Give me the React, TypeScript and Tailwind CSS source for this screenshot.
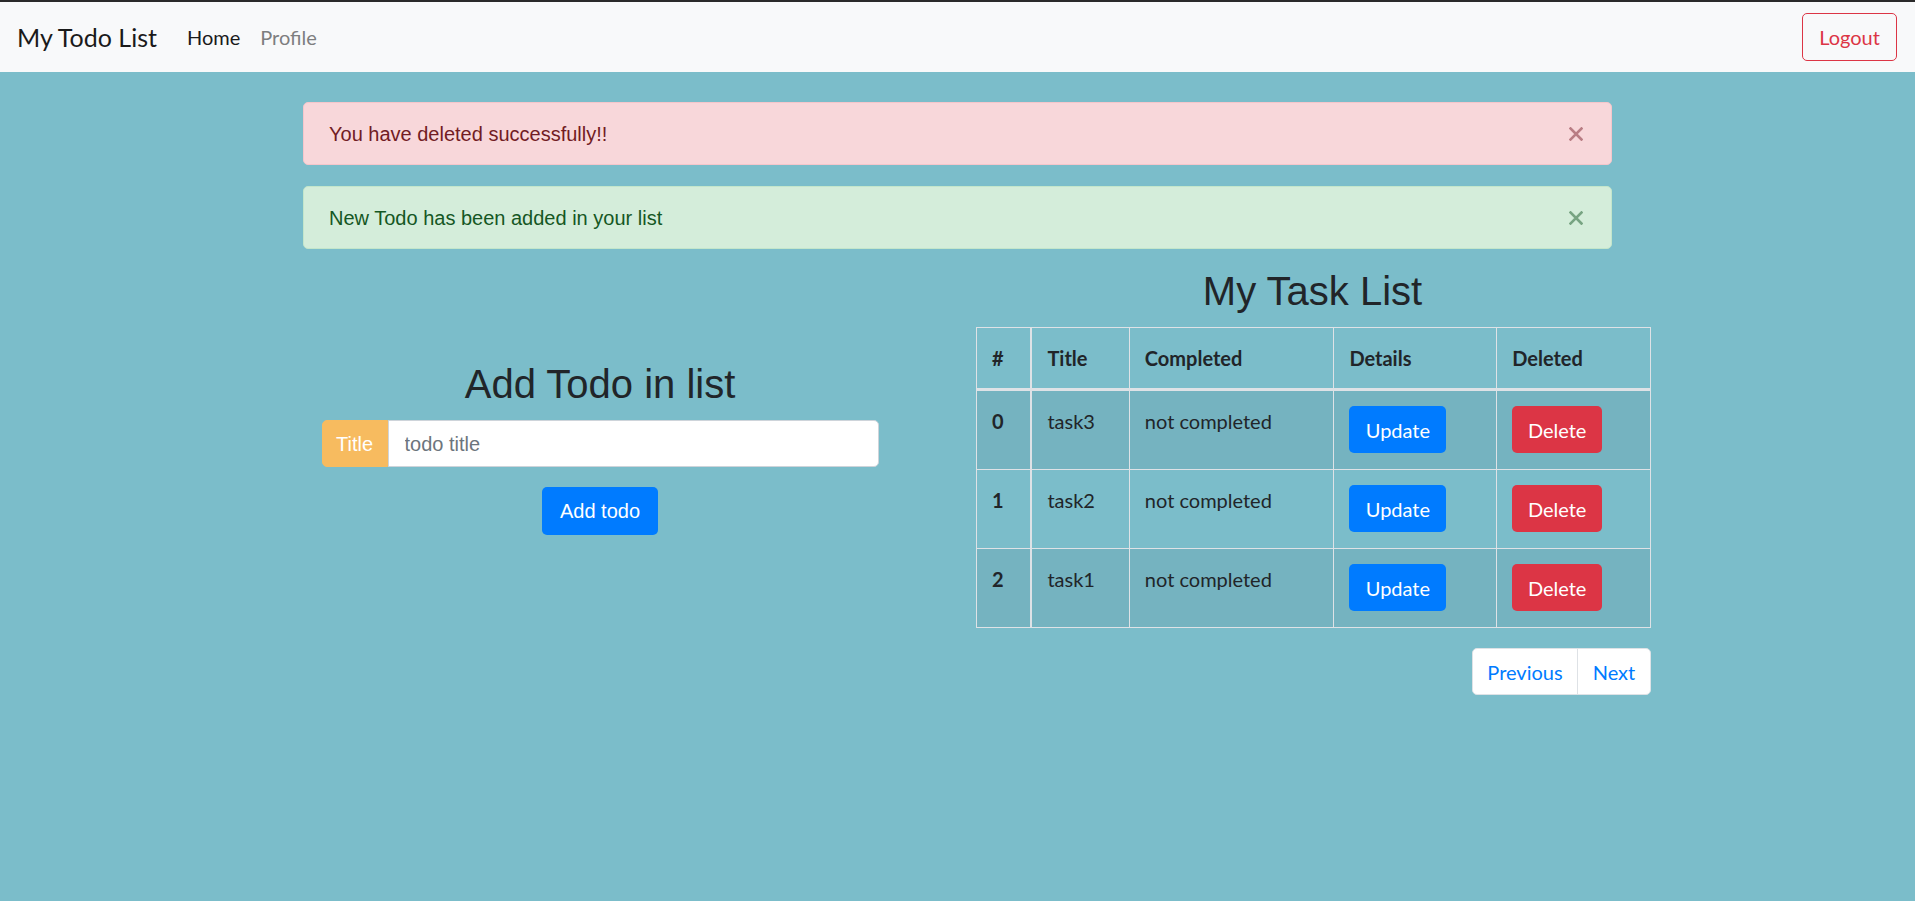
import React from 'react'

const todos = [
  { sno: 0, title: 'task3', status: 'not completed' },
  { sno: 1, title: 'task2', status: 'not completed' },
  { sno: 2, title: 'task1', status: 'not completed' },
]

const segoe = { fontFamily: 'Lato, "Open Sans", sans-serif' }

function CloseX({ color }: { color: string }) {
  return (
    <svg width="14" height="14" viewBox="0 0 14 14" className="shrink-0">
      <path d="M1.5 1.5 L12.5 12.5 M12.5 1.5 L1.5 12.5" stroke={color} strokeWidth="2.6" strokeLinecap="square" />
    </svg>
  )
}

export default function App() {
  return (
    <div className="min-h-screen bg-[#7bbdca] font-['Liberation_Sans',Arial,sans-serif] text-[#212529]">
      {/* Navbar */}
      <nav
        className="h-[72px] border-t-2 border-[#2a2a2a] bg-[#f8f9fa] flex items-center justify-between pl-[17px] pr-[18px]"
        style={segoe}
      >
        <div className="flex items-center">
          <span className="text-[25px] leading-[38px] text-[#1a1a1a] mr-[20px]">My Todo List</span>
          <a className="px-[10px] text-[20px] leading-[30px] text-[#1a1a1a]">Home</a>
          <a className="px-[10px] text-[20px] leading-[30px] text-[#7d7e7f]">Profile</a>
        </div>
        <button className="w-[95px] h-[48px] border border-[#dc3545] rounded-[5px] text-[#dc3545] text-[20px] leading-[30px] bg-transparent">
          Logout
        </button>
      </nav>

      {/* Alerts */}
      <div className="w-[1309px] mx-auto pt-[30px]">
        <div className="h-[63px] flex items-center justify-between pl-[25px] pr-[28px] bg-[#f8d7da] border border-[#f5c6cb] rounded-[5px] text-[#721c24] text-[20px] mb-[21px]">
          <span>You have deleted successfully!!</span>
          <CloseX color="#b97d84" />
        </div>
        <div className="h-[63px] flex items-center justify-between pl-[25px] pr-[28px] bg-[#d4edda] border border-[#c3e6cb] rounded-[5px] text-[#155724] text-[20px] mb-[18px]">
          <span>New Todo has been added in your list</span>
          <CloseX color="#77a482" />
        </div>
      </div>

      {/* Main */}
      <div className="w-[1425px] mx-auto flex">
        {/* Add todo */}
        <div className="w-[710px] px-[19px] flex flex-col items-center">
          <h2 className="mt-[93px] text-[40px] leading-[48px] font-normal mb-[12px]">Add Todo in list</h2>
          <div className="w-[557px] h-[47px] flex">
            <span className="w-[66px] flex items-center justify-center bg-[#f7bb5f] border border-[#f7bb5f] rounded-l-[5px] text-white text-[20px]">
              Title
            </span>
            <input
              className="flex-1 min-w-0 bg-white border border-[#ced4da] rounded-r-[5px] px-[16px] text-[20px] text-[#495057] placeholder:text-[#6c757d] outline-none"
              placeholder="todo title"
            />
          </div>
          <button className="mt-[20px] w-[116px] h-[48px] bg-[#007bff] rounded-[5px] text-white text-[20px]">
            Add todo
          </button>
        </div>

        {/* Task list */}
        <div className="w-[715px] px-[21px]">
          <h2 className="text-center text-[40px] leading-[48px] font-normal mb-[12px]">My Task List</h2>
          <table className="w-[675px] border-collapse text-[20px] leading-[30px]" style={segoe}>
            <thead>
              <tr>
                <th className="w-[55px] border border-r-2 border-b-[3px] border-[#dee2e6] p-[15px] text-left font-bold">#</th>
                <th className="w-[98px] border border-b-[3px] border-[#dee2e6] p-[15px] text-left font-bold">Title</th>
                <th className="w-[205px] border border-b-[3px] border-[#dee2e6] p-[15px] text-left font-bold">Completed</th>
                <th className="w-[163px] border border-b-[3px] border-[#dee2e6] p-[15px] text-left font-bold">Details</th>
                <th className="w-[154px] border border-b-[3px] border-[#dee2e6] p-[15px] text-left font-bold">Deleted</th>
              </tr>
            </thead>
            <tbody>
              {todos.map((t, i) => (
                <tr key={t.sno} className={i % 2 === 0 ? 'bg-[#75b3c0]' : ''}>
                  <th className="border border-r-2 border-[#dee2e6] p-[15px] pb-[16px] text-left align-top font-bold">{t.sno}</th>
                  <td className="border border-[#dee2e6] p-[15px] pb-[16px] align-top">{t.title}</td>
                  <td className="border border-[#dee2e6] p-[15px] pb-[16px] align-top">{t.status}</td>
                  <td className="border border-[#dee2e6] p-[15px] pb-[16px] align-top">
                    <button className="w-[97px] h-[47px] bg-[#007bff] rounded-[5px] text-white text-[20px] leading-[30px]">
                      Update
                    </button>
                  </td>
                  <td className="border border-[#dee2e6] p-[15px] pb-[16px] align-top">
                    <button className="w-[90px] h-[47px] bg-[#dc3545] rounded-[5px] text-white text-[20px] leading-[30px]">
                      Delete
                    </button>
                  </td>
                </tr>
              ))}
            </tbody>
          </table>
          <div className="w-[675px] flex justify-end mt-[20px]" style={segoe}>
            <div className="flex h-[47px] bg-white border border-[#dee2e6] rounded-[5px] text-[#007bff] text-[20px]">
              <a className="w-[105px] flex items-center justify-center border-r border-[#dee2e6]">Previous</a>
              <a className="w-[72px] flex items-center justify-center">Next</a>
            </div>
          </div>
        </div>
      </div>
    </div>
  )
}
